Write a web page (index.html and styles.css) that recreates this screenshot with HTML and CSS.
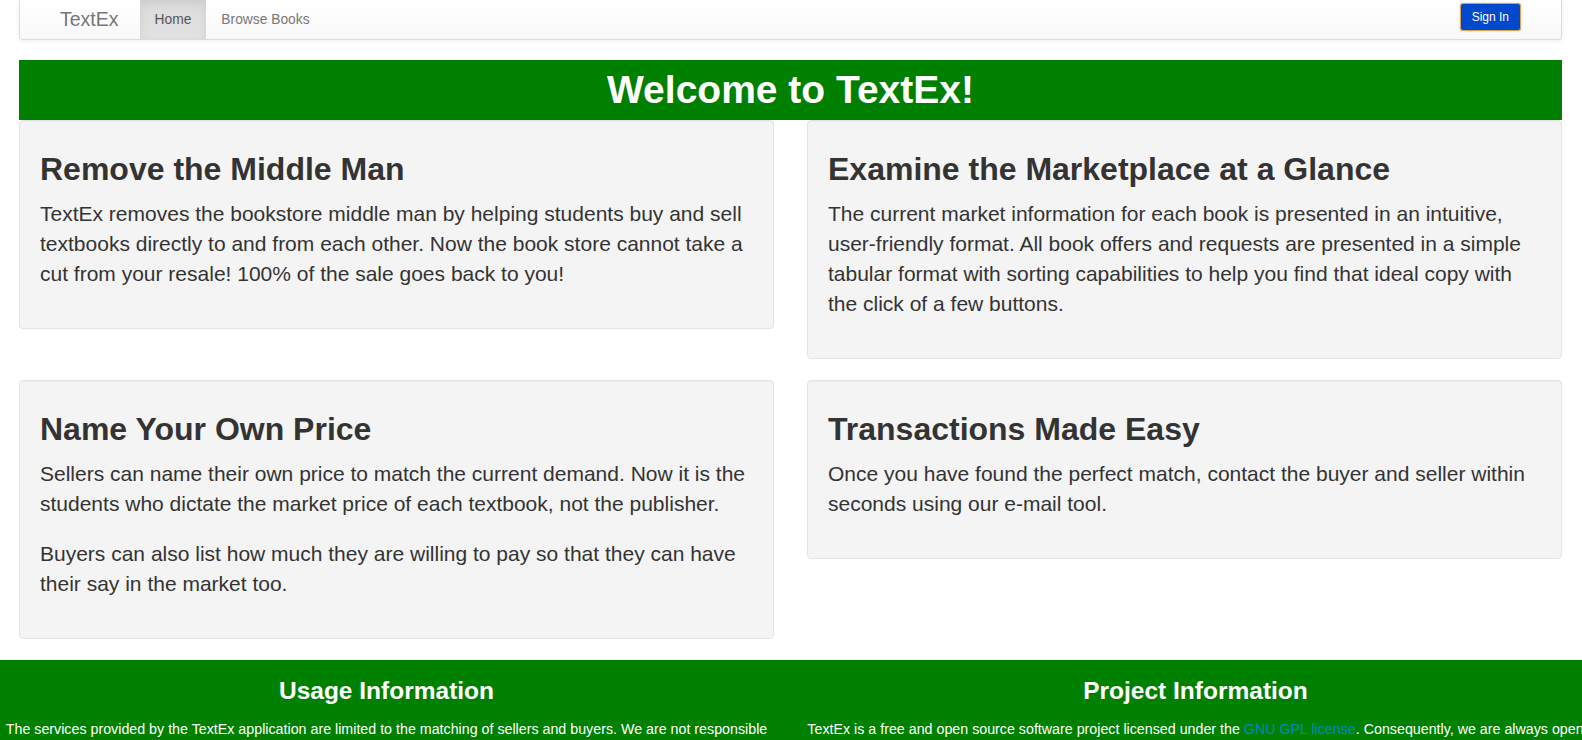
FILE: index.html
```html
<!DOCTYPE html>
<html>
<head>
<meta charset="utf-8">
<title>TextEx</title>
<link rel="stylesheet" href="styles.css">
</head>
<body>
<nav class="navbar">
  <a class="brand" href="#">TextEx</a>
  <ul class="nav">
    <li class="active"><a href="#">Home</a></li>
    <li><a href="#">Browse Books</a></li>
  </ul>
  <button class="signin" type="button">Sign In</button>
</nav>

<main class="main">
  <h1 class="banner">Welcome to TextEx!</h1>
  <div class="grid">
    <section class="well">
      <h2>Remove the Middle Man</h2>
      <p>TextEx removes the bookstore middle man by helping students buy and sell textbooks directly to and from each other. Now the book store cannot take a cut from your resale! 100% of the sale goes back to you!</p>
    </section>
    <section class="well">
      <h2>Examine the Marketplace at a Glance</h2>
      <p>The current market information for each book is presented in an intuitive, user-friendly format. All book offers and requests are presented in a simple tabular format with sorting capabilities to help you find that ideal copy with the click of a few buttons.</p>
    </section>
    <section class="well">
      <h2>Name Your Own Price</h2>
      <p>Sellers can name their own price to match the current demand. Now it is the students who dictate the market price of each textbook, not the publisher.</p>
      <p>Buyers can also list how much they are willing to pay so that they can have their say in the market too.</p>
    </section>
    <section class="well">
      <h2>Transactions Made Easy</h2>
      <p>Once you have found the perfect match, contact the buyer and seller within seconds using our e-mail tool.</p>
    </section>
  </div>
</main>

<footer class="footer">
  <div class="footer-row">
    <div class="footer-col">
      <h3>Usage Information</h3>
      <p>The services provided by the TextEx application are limited to the matching of sellers and buyers. We are not responsible for any transactions, payments or exchanges of books that take place between users of the application.</p>
    </div>
    <div class="footer-col">
      <h3>Project Information</h3>
      <p>TextEx is a free and open source software project licensed under the <a href="#">GNU GPL license</a>. Consequently, we are always open to contributions from anyone who would like to help improve the application.</p>
    </div>
  </div>
</footer>
</body>
</html>
```

FILE: styles.css
```css
html {
  overflow-x: hidden;
}

body {
  margin: 0;
  font-family: "Liberation Sans", Arial, sans-serif;
  font-size: 14px;
  line-height: 1.428571;
  color: #333;
  background: #fff;
}

a {
  text-decoration: none;
}

/* Navbar */
.navbar {
  display: flex;
  align-items: stretch;
  height: 39px;
  margin: 0 20px 20px 19px;
  background-image: linear-gradient(to bottom, #ffffff 0, #f8f8f8 100%);
  border: 1px solid #dcdcdc;
  border-top: none;
  border-radius: 0 0 4px 4px;
  box-shadow: inset 0 1px 0 rgba(255,255,255,.15), 0 1px 5px rgba(0,0,0,.075);
}

.brand {
  display: flex;
  align-items: center;
  padding: 0 21px 0 40px;
  font-size: 19.5px;
  color: #777;
}

.nav {
  display: flex;
  margin: 0;
  padding: 0;
  list-style: none;
}

.nav li a {
  display: flex;
  align-items: center;
  height: 100%;
  padding: 0 15px;
  font-size: 13.8px;
  color: #777;
}

.nav li.active a {
  color: #555;
  background-image: linear-gradient(to bottom, #dbdbdb 0, #e2e2e2 100%);
  box-shadow: inset 0 3px 9px rgba(0,0,0,.075);
}

.signin {
  align-self: flex-start;
  margin: 3px 40px 0 auto;
  height: 28px;
  padding: 0 11px;
  font-family: "Liberation Sans", Arial, sans-serif;
  font-size: 12px;
  color: #fff;
  background: #0048cc;
  border: 1px solid #d6a456;
  border-radius: 3px;
  box-shadow: 0 0 2px rgba(214,164,86,.6);
}

/* Main */
.main {
  padding: 0 20px 0 19px;
}

.banner {
  margin: 0;
  height: 60px;
  line-height: 60px;
  font-size: 39px;
  font-weight: bold;
  text-align: center;
  color: #fff;
  background: #008000;
}

.grid {
  display: grid;
  grid-template-columns: 1fr 1fr;
  column-gap: 33px;
  row-gap: 21px;
  align-items: start;
  margin-bottom: 21px;
}

.well {
  padding: 19px 19px 19px 20px;
  background: #f4f4f4;
  border: 1px solid #e3e3e3;
  border-radius: 4px;
  box-shadow: inset 0 1px 1px rgba(0,0,0,.03);
}

.well h2 {
  margin: 12px 0 12px;
  font-size: 32px;
  font-weight: bold;
  line-height: 1.1;
  color: #333;
}

.well p {
  margin: 0 0 20px;
  font-size: 21px;
  line-height: 30px;
}

/* Footer */
.footer {
  overflow: hidden;
  background: #008000;
  color: #fff;
}

.footer-row {
  display: flex;
  margin: 0 -18px;
}

.footer-col {
  flex: 1 1 50%;
  padding: 0 15px;
  text-align: center;
}

.footer-col h3 {
  margin: 18px 0 14px;
  font-size: 24.5px;
  font-weight: bold;
  line-height: 1.1;
}

.footer-col p {
  margin: 0 0 10px;
  font-size: 14.25px;
  line-height: 20px;
}

.footer-col a {
  color: #0088cc;
}
```
